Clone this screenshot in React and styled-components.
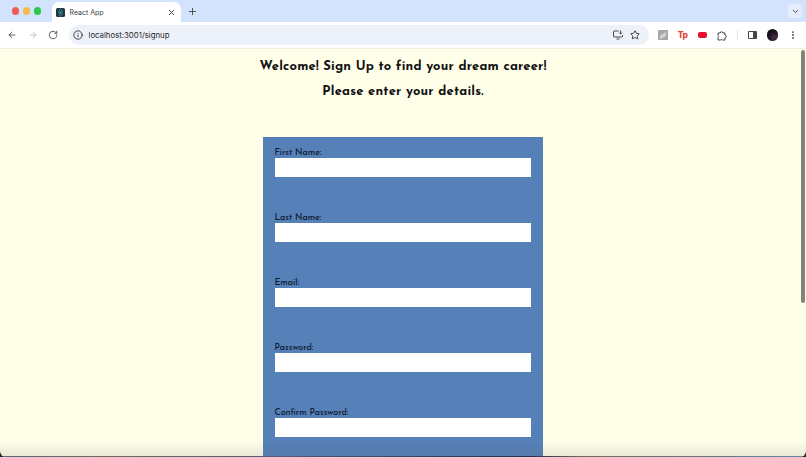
import React from "react"
import styled, { createGlobalStyle } from "styled-components"
import { ArrowLeft, ArrowRight, RotateCw, Info, Plus, X, ChevronDown, Star, EllipsisVertical } from "lucide-react"

const GlobalStyle = createGlobalStyle`
  html, body {
    margin: 0;
    height: 100%;
    overflow: hidden;
    background: #2a2a2a;
  }
`

const Window = styled.div`
  width: 806px;
  height: 457px;
  position: relative;
  overflow: hidden;
  display: flex;
  flex-direction: column;
  border-radius: 0 0 6px 6px;
  font-family: "Inter", "Liberation Sans", sans-serif;
`

const TabStrip = styled.div`
  height: 22px;
  flex: none;
  display: flex;
  align-items: flex-end;
  background: #d3e3fd;
  padding-left: 11.5px;
`

const Light = styled.span`
  width: 7.5px;
  height: 7.5px;
  border-radius: 50%;
  background: ${props => props.color};
  margin-right: 3.5px;
  align-self: center;
`

const Tab = styled.div`
  width: 129px;
  height: 20px;
  margin-left: 7px;
  padding: 0 5px 0 4px;
  box-sizing: border-box;
  background: #fff;
  border-radius: 7px 7px 0 0;
  display: flex;
  align-items: center;
  font-size: 7px;
  color: #3c4043;
`

const Favicon = styled.svg`
  width: 9px;
  height: 9px;
  margin-right: 5px;
  flex: none;
`

const TabTitle = styled.span`
  flex: 1;
`

const NewTab = styled.span`
  display: flex;
  align-self: center;
  margin-left: 6.5px;
  color: #444746;
`

const Collapse = styled.span`
  margin-left: auto;
  margin-right: 4px;
  align-self: center;
  width: 14px;
  height: 14px;
  border-radius: 4px;
  background: #e4edfc;
  display: flex;
  align-items: center;
  justify-content: center;
  color: #444746;
`

const Toolbar = styled.div`
  height: 27px;
  flex: none;
  box-sizing: border-box;
  display: flex;
  align-items: center;
  background: #fff;
  padding-left: 7px;
  color: #444746;
  border-bottom: 1px solid #f2efe0;
`

const NavButton = styled.span`
  display: flex;
  width: 20.5px;
  color: ${props => (props.$off ? "#b4b6b8" : "#444746")};
`

const Omnibox = styled.div`
  width: 580px;
  height: 20px;
  padding: 0 9px 0 4px;
  box-sizing: border-box;
  border-radius: 10px;
  background: #edf2fa;
  display: flex;
  align-items: center;
  font-size: 7.8px;
  color: #1f1f1f;
`

const Url = styled.span`
  flex: 1;
  margin-left: 6px;
`

const ToolIcons = styled.div`
  display: flex;
  align-items: center;
  gap: 7px;
`

const Extensions = styled.div`
  display: flex;
  align-items: center;
  margin-left: 4px;
`

const Slot = styled.span`
  width: 20px;
  display: flex;
  align-items: center;
  justify-content: center;
`

const TpBadge = styled.span`
  font-size: 8.5px;
  font-weight: 800;
  color: #e8403a;
  letter-spacing: -0.6px;
`

const RedPill = styled.span`
  width: 9px;
  height: 6px;
  border-radius: 2px;
  background: #e5102a;
`

const Divider = styled.span`
  width: 1px;
  height: 10px;
  margin: 0 4.5px;
  background: #dfe6ee;
`

const SidePanel = styled.span`
  width: 9px;
  height: 8px;
  box-sizing: border-box;
  border: 1px solid #444746;
  border-right-width: 4px;
  border-radius: 1px;
`

const Avatar = styled.span`
  width: 11.5px;
  height: 11.5px;
  border-radius: 50%;
  background: radial-gradient(circle at 65% 70%, #4a2a44 0, #15101c 60%);
`

const Page = styled.main`
  flex: 1;
  min-height: 0;
  background: #fffee9;
  display: flex;
  flex-direction: column;
  align-items: center;
  font-family: "Josefin Sans", "Lato", "Liberation Sans", sans-serif;
  color: #111;
`

const Heading = styled.h2`
  margin: ${props => (props.$first ? "8px" : "6px")} 0 0;
  font-size: 13px;
  line-height: 19px;
  font-weight: 700;
  letter-spacing: 0.2px;
`

const SignupForm = styled.form`
  width: 280px;
  flex: none;
  margin-top: 36px;
  padding: 12px 12px 40px 11.5px;
  box-sizing: border-box;
  background: #5680b8;
  display: flex;
  flex-direction: column;
  gap: 37.5px;
`

const Field = styled.label`
  display: flex;
  flex-direction: column;
  font-size: 8.9px;
  font-weight: 500;
  line-height: 8.5px;
  color: #0c1a2e;
`

const Input = styled.input`
  height: 19px;
  box-sizing: border-box;
  border: 0;
  background: #fff;
  padding: 0;
`

const Scrollbar = styled.div`
  position: absolute;
  right: 1px;
  top: 50px;
  width: 4px;
  height: 253px;
  border-radius: 2px;
  background: #83837a;
`

const BottomShade = styled.div`
  position: absolute;
  left: 0;
  right: 0;
  bottom: 0;
  height: 16px;
  pointer-events: none;
  background: linear-gradient(to bottom, rgba(90, 90, 80, 0), rgba(90, 90, 80, 0.14));
`

const BottomEdge = styled.div`
  position: absolute;
  left: 0;
  right: 0;
  bottom: 0;
  height: 1px;
  background: linear-gradient(to right, #4c6a86 0, #6c6a5e 12%, #4c5f76 34%, #1f3350 66%, #6f6a5c 72%, #5a84a4 100%);
`

const fields = ["First Name:", "Last Name:", "Email:", "Password:", "Confirm Password:"]

const App = () => (
  <Window>
    <GlobalStyle />
    <TabStrip>
      <Light color="#ec5f57" />
      <Light color="#f4bd4f" />
      <Light color="#2dc84d" />
      <Tab>
        <Favicon viewBox="0 0 9 9">
          <rect width="9" height="9" rx="1.5" fill="#20363f" />
          <ellipse cx="4.5" cy="4.5" rx="1.6" ry="3.6" fill="none" stroke="#3fa6b8" strokeWidth="0.7" />
          <circle cx="4.5" cy="4.5" r="0.9" fill="#3fa6b8" />
        </Favicon>
        <TabTitle>React App</TabTitle>
        <X size={9} strokeWidth={2.5} />
      </Tab>
      <NewTab>
        <Plus size={11} strokeWidth={2} />
      </NewTab>
      <Collapse>
        <ChevronDown size={9} strokeWidth={2.5} />
      </Collapse>
    </TabStrip>
    <Toolbar>
      <NavButton><ArrowLeft size={10} strokeWidth={2} /></NavButton>
      <NavButton $off><ArrowRight size={10} strokeWidth={2} /></NavButton>
      <NavButton><RotateCw size={10} strokeWidth={2} /></NavButton>
      <Omnibox>
        <Info size={10} strokeWidth={2} />
        <Url>localhost:3001/signup</Url>
        <ToolIcons>
          {/* install app icon */}
          <svg width="10" height="10" viewBox="0 0 10 10" fill="none" stroke="#444746" strokeWidth="1">
            <path d="M5.5 1H1.2a.7.7 0 0 0-.7.7v4.6a.7.7 0 0 0 .7.7h7.6a.7.7 0 0 0 .7-.7V5" />
            <path d="M3.5 9h3M7.6 .5v3.4M6.2 2.7l1.4 1.4L9 2.7" />
          </svg>
          <Star size={10} strokeWidth={2} />
        </ToolIcons>
      </Omnibox>
      <Extensions>
        <Slot>
          <svg width="10" height="10" viewBox="0 0 10 10">
            <rect width="10" height="10" fill="#a8a8a8" />
            <path d="M2 6.5 8 3M2 8.5 8 5" stroke="#e6e6e6" strokeWidth="1.2" />
          </svg>
        </Slot>
        <Slot><TpBadge>Tp</TpBadge></Slot>
        <Slot><RedPill /></Slot>
        <Slot>
          <svg width="11" height="11" viewBox="0 0 11 11" fill="none" stroke="#444746" strokeWidth="1">
            <path d="M1 3h2.2a1.3 1.3 0 0 1 2.6 0H8v2.2a1.3 1.3 0 0 1 0 2.6V10H5.4a1.3 1.3 0 0 0-2 0H1V7.6a1.3 1.3 0 0 0 0-2.2z" />
          </svg>
        </Slot>
        <Divider />
        <Slot><SidePanel /></Slot>
        <Slot><Avatar /></Slot>
        <Slot><EllipsisVertical size={10} strokeWidth={2.5} /></Slot>
      </Extensions>
    </Toolbar>
    <Page>
      <Heading $first>Welcome! Sign Up to find your dream career!</Heading>
      <Heading>Please enter your details.</Heading>
      <SignupForm>
        {fields.map(field => (
          <Field key={field}>
            {field}
            <Input type="text" />
          </Field>
        ))}
      </SignupForm>
    </Page>
    <Scrollbar />
    <BottomShade />
    <BottomEdge />
  </Window>
)

export default App
